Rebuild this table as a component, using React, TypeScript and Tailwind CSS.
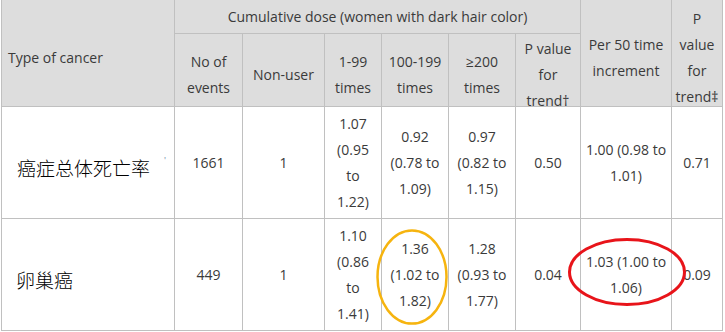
import React from "react";

const font = { fontFamily: '"Open Sans", "Noto Sans", sans-serif' };
const cjk = { fontFamily: '"Noto Sans CJK SC", "Noto Sans", sans-serif' };

function Lines({ lines }: { lines: string[] }) {
  return (
    <div className="flex flex-col items-center text-center">
      {lines.map((l, i) => (
        <span key={i} className="whitespace-nowrap">
          {l}
        </span>
      ))}
    </div>
  );
}

function HeadTall({ lines, col, left }: { lines: string[]; col: string; left?: boolean }) {
  return (
    <div className={`bg-[#dddddd] overflow-hidden row-span-2 ${col}`}>
      <div className={`h-[116px] flex items-center ${left ? "justify-start pl-[6px]" : "justify-center"}`}>
        {left ? <span className="whitespace-nowrap">{lines[0]}</span> : <Lines lines={lines} />}
      </div>
    </div>
  );
}

function HeadSub({ lines }: { lines: string[] }) {
  return (
    <div className="bg-[#dddddd] overflow-hidden">
      <div className="h-[82px] flex items-center justify-center">
        <Lines lines={lines} />
      </div>
    </div>
  );
}

function Cell({ lines }: { lines: string[] }) {
  return (
    <div className="bg-white flex items-center justify-center">
      <Lines lines={lines} />
    </div>
  );
}

export default function App() {
  return (
    <div className="relative w-[725px] h-[332px] bg-white overflow-hidden" style={font}>
      <div
        className="ml-px grid w-fit gap-px bg-[#c0c0c0] pl-px pr-px pb-px text-[14px] leading-[26px] text-[#3a3a3a]"
        style={{
          gridTemplateColumns: "172px 67px 81px 56px 66px 66px 64px 90px 50px",
          gridTemplateRows: "33px 72px 111px 111px",
        }}
      >
        <HeadTall lines={["Type of cancer"]} col="col-start-1" left />
        <div className="bg-[#dddddd] col-span-6 flex items-center justify-center whitespace-nowrap">
          Cumulative dose (women with dark hair color)
        </div>
        <HeadTall lines={["Per 50 time", "increment"]} col="col-start-8" />
        <HeadTall lines={["P", "value", "for", "trend‡"]} col="col-start-9" />

        <HeadSub lines={["No of", "events"]} />
        <HeadSub lines={["Non-user"]} />
        <HeadSub lines={["1-99", "times"]} />
        <HeadSub lines={["100-199", "times"]} />
        <HeadSub lines={["≥200", "times"]} />
        <HeadSub lines={["P value", "for", "trend†"]} />

        <div className="bg-white flex items-center pl-[15px] pt-[11px]">
          <span className="text-[19px] leading-[26px] font-light text-black whitespace-nowrap" style={cjk}>
            癌症总体死亡率
          </span>
          <span className="ml-[14px] mb-[14px] text-[9px] leading-[8px] text-[#7088a8]">'</span>
        </div>
        <Cell lines={["1661"]} />
        <Cell lines={["1"]} />
        <Cell lines={["1.07", "(0.95", "to", "1.22)"]} />
        <Cell lines={["0.92", "(0.78 to", "1.09)"]} />
        <Cell lines={["0.97", "(0.82 to", "1.15)"]} />
        <Cell lines={["0.50"]} />
        <Cell lines={["1.00 (0.98 to", "1.01)"]} />
        <Cell lines={["0.71"]} />

        <div className="bg-white flex items-center pl-[14px] pt-[11px]">
          <span className="text-[19px] leading-[26px] font-light text-black whitespace-nowrap" style={cjk}>
            卵巢癌
          </span>
        </div>
        <Cell lines={["449"]} />
        <Cell lines={["1"]} />
        <Cell lines={["1.10", "(0.86", "to", "1.41)"]} />
        <Cell lines={["1.36", "(1.02 to", "1.82)"]} />
        <Cell lines={["1.28", "(0.93 to", "1.77)"]} />
        <Cell lines={["0.04"]} />
        <Cell lines={["1.03 (1.00 to", "1.06)"]} />
        <Cell lines={["0.09"]} />
      </div>

      <svg className="absolute left-0 top-0 pointer-events-none" width="725" height="332">
        <ellipse cx="412" cy="277" rx="34.5" ry="46.5" fill="none" stroke="#f6b40f" strokeWidth="2.5" />
        <ellipse cx="627" cy="272" rx="57.5" ry="32.5" fill="none" stroke="#e8141a" strokeWidth="3" />
      </svg>
    </div>
  );
}
